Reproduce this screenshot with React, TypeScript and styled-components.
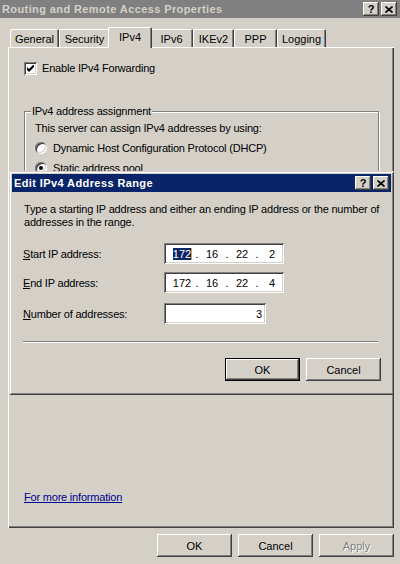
import React from "react";
import styled, { createGlobalStyle, css } from "styled-components";

const GlobalStyle = createGlobalStyle`
  html, body {
    margin: 0;
    padding: 0;
  }
  body {
    background: #d4d0c8;
    font-family: "Liberation Sans", Arial, sans-serif;
    font-size: 11px;
    letter-spacing: -0.2px;
    color: #000;
  }
`;

const raised = css`
  box-shadow: inset -1px -1px #404040, inset 1px 1px #fff,
    inset -2px -2px #808080, inset 2px 2px #d4d0c8;
`;

const sunken = css`
  box-shadow: inset 1px 1px #808080, inset -1px -1px #fff,
    inset 2px 2px #404040, inset -2px -2px #d4d0c8;
`;

const Window = styled.div`
  position: relative;
  width: 400px;
  height: 564px;
  overflow: hidden;
  display: flex;
  flex-direction: column;
`;

const TitleBar = styled.div<{ $active?: boolean }>`
  flex-shrink: 0;
  height: 18px;
  display: flex;
  align-items: center;
  justify-content: space-between;
  padding: 0 ${(p) => (p.$active ? 2 : 3)}px 0 2px;
  background: ${(p) => (p.$active ? "#0a246a" : "#808080")};
  color: ${(p) => (p.$active ? "#fff" : "#d4d0c8")};
  font-weight: bold;
  letter-spacing: 0.4px;
  white-space: nowrap;
`;

const CaptionButtons = styled.div`
  display: flex;
  gap: 2px;
`;

const CaptionButton = styled.div`
  box-sizing: border-box;
  width: 16px;
  height: 14px;
  display: flex;
  align-items: center;
  justify-content: center;
  background: #d4d0c8;
  color: #000;
  font-weight: bold;
  font-size: 11px;
  letter-spacing: 0;
  line-height: 14px;
  ${raised}
`;

const Body = styled.div`
  display: flex;
  flex-direction: column;
  padding: 9px 6px 0 8px;
`;

const TabRow = styled.div`
  position: relative;
  z-index: 1;
  display: flex;
  align-items: flex-end;
  height: 20px;
  padding-left: 2px;
`;

const Tab = styled.div<{ $w: number; $active?: boolean }>`
  box-sizing: border-box;
  width: ${(p) => p.$w}px;
  height: 18px;
  display: flex;
  align-items: center;
  justify-content: center;
  padding-top: 1px;
  background: #d4d0c8;
  letter-spacing: 0;
  border-top-left-radius: 2px;
  border-top-right-radius: 2px;
  box-shadow: inset 1px 1px #fff, inset -1px 0 #404040, inset -2px 0 #808080;
  white-space: nowrap;
  ${(p) =>
    p.$active &&
    css`
      position: relative;
      z-index: 1;
      height: 21px;
      margin: 0 -2px -1px;
      padding-bottom: 3px;
    `}
`;

const Panel = styled.div`
  box-sizing: border-box;
  height: 481px;
  display: flex;
  flex-direction: column;
  padding: 15px 0 0 16px;
  box-shadow: inset 1px 1px #fff, inset -1px -1px #404040,
    inset -2px -2px #808080;
`;

const CheckRow = styled.div`
  display: flex;
  align-items: center;
  gap: 5px;
  height: 13px;
  line-height: 13px;
`;

const CheckBox = styled.div`
  box-sizing: border-box;
  width: 13px;
  height: 13px;
  display: flex;
  align-items: center;
  justify-content: center;
  background: #fff;
  ${sunken}
`;

const GroupBox = styled.fieldset`
  box-sizing: border-box;
  width: 355px;
  height: 270px;
  margin: 30px 0 0;
  padding: 4px 0 0 10px;
  border: 1px solid #808080;
  box-shadow: 1px 1px 0 #fff, inset 1px 1px 0 #fff;
`;

const Legend = styled.legend`
  margin-left: -4px;
  padding: 0 1px;
  line-height: 13px;
  background: #d4d0c8;
`;

const Line = styled.div`
  line-height: 13px;
  white-space: nowrap;
`;

const RadioRow = styled.div<{ $top: number }>`
  display: flex;
  align-items: center;
  gap: 6px;
  height: 13px;
  margin-top: ${(p) => p.$top}px;
  white-space: nowrap;
`;

const Radio = styled.div<{ $checked?: boolean }>`
  position: relative;
  box-sizing: border-box;
  width: 12px;
  height: 12px;
  border-radius: 50%;
  background: #fff;
  ${sunken}
  ${(p) =>
    p.$checked &&
    css`
      &::after {
        content: "";
        position: absolute;
        left: 4px;
        top: 4px;
        width: 4px;
        height: 4px;
        border-radius: 50%;
        background: #000;
      }
    `}
`;

const MoreLink = styled.a`
  align-self: flex-start;
  margin: auto 0 24px;
  color: #000090;
  text-decoration: underline;
  line-height: 13px;
  cursor: pointer;
`;

const ButtonRow = styled.div<{ $top: number; $right: number }>`
  display: flex;
  justify-content: flex-end;
  gap: 6px;
  margin-top: ${(p) => p.$top}px;
  padding-right: ${(p) => p.$right}px;
`;

const Button = styled.button<{ $default?: boolean; $disabled?: boolean }>`
  box-sizing: border-box;
  width: 75px;
  height: 23px;
  padding: 0;
  border: none;
  background: #d4d0c8;
  font-family: "Liberation Sans", Arial, sans-serif;
  font-size: 11px;
  color: ${(p) => (p.$disabled ? "#808080" : "#000")};
  text-shadow: ${(p) => (p.$disabled ? "1px 1px 0 #fff" : "none")};
  ${raised}
  ${(p) =>
    p.$default &&
    css`
      border: 1px solid #000;
    `}
`;

const Dialog = styled.div`
  position: absolute;
  left: 9px;
  top: 171px;
  z-index: 5;
  box-sizing: border-box;
  width: 385px;
  height: 224px;
  padding: 3px;
  display: flex;
  flex-direction: column;
  background: #d4d0c8;
  box-shadow: inset 1px 1px #d4d0c8, inset -1px -1px #404040,
    inset 2px 2px #fff, inset -2px -2px #808080;
`;

const DialogBody = styled.div`
  display: flex;
  flex-direction: column;
  padding: 11px 0 0 12px;
`;

const FieldRow = styled.div<{ $top: number }>`
  display: flex;
  align-items: center;
  margin-top: ${(p) => p.$top}px;
`;

const FieldLabel = styled.div`
  width: 140px;
  margin-left: -1px;
  white-space: nowrap;
`;

const Key = styled.span`
  text-decoration: underline;
`;

const IpBox = styled.div`
  box-sizing: border-box;
  width: 120px;
  height: 21px;
  display: flex;
  align-items: center;
  padding-left: 6px;
  margin-left: 1px;
  background: #fff;
  letter-spacing: 0;
  ${sunken}
`;

const Octet = styled.div`
  width: 24px;
  text-align: center;
`;

const Dot = styled.div`
  width: 6px;
  text-align: center;
`;

const Selected = styled.span`
  background: #0a246a;
  color: #fff;
  box-shadow: 1px 0 0 #e0a030;
`;

const NumberBox = styled.div`
  box-sizing: border-box;
  width: 102px;
  height: 21px;
  margin-left: 1px;
  display: flex;
  align-items: center;
  justify-content: flex-end;
  padding-right: 4px;
  background: #fff;
  ${sunken}
`;

const Separator = styled.div`
  width: 355px;
  margin: 17px 0 0 -1px;
  border-top: 1px solid #808080;
  border-bottom: 1px solid #fff;
`;

const CloseGlyph = () => (
  <svg width="8" height="7" viewBox="0 0 8 7">
    <path d="M0.5 0.5 L7.5 6.5 M7.5 0.5 L0.5 6.5" stroke="#000" strokeWidth="1.7" />
  </svg>
);

const CheckGlyph = () => (
  <svg width="7" height="7" viewBox="0 0 7 7">
    <path d="M0 2 L2 4 L7 -1 L7 2 L2 7 L0 5 Z" fill="#000" />
  </svg>
);

const tabs = [
  { label: "General", w: 49 },
  { label: "Security", w: 51 },
  { label: "IPv4", w: 44, active: true },
  { label: "IPv6", w: 43 },
  { label: "IKEv2", w: 41 },
  { label: "PPP", w: 43 },
  { label: "Logging", w: 49 },
];

const IpField = ({ octets, selectFirst }: { octets: string[]; selectFirst?: boolean }) => (
  <IpBox>
    {octets.map((o, i) => (
      <React.Fragment key={i}>
        {i > 0 && <Dot>.</Dot>}
        <Octet>{i === 0 && selectFirst ? <Selected>{o}</Selected> : o}</Octet>
      </React.Fragment>
    ))}
  </IpBox>
);

export default function App() {
  return (
    <>
      <GlobalStyle />
      <Window>
        <TitleBar>
          <span>Routing and Remote Access Properties</span>
          <CaptionButtons>
            <CaptionButton>?</CaptionButton>
            <CaptionButton>
              <CloseGlyph />
            </CaptionButton>
          </CaptionButtons>
        </TitleBar>
        <Body>
          <TabRow>
            {tabs.map((t) => (
              <Tab key={t.label} $w={t.w} $active={t.active}>
                {t.label}
              </Tab>
            ))}
          </TabRow>
          <Panel>
            <CheckRow>
              <CheckBox>
                <CheckGlyph />
              </CheckBox>
              <span>Enable IPv4 Forwarding</span>
            </CheckRow>
            <GroupBox>
              <Legend>IPv4 address assignment</Legend>
              <Line>This server can assign IPv4 addresses by using:</Line>
              <RadioRow $top={6}>
                <Radio />
                <span>Dynamic Host Configuration Protocol (DHCP)</span>
              </RadioRow>
              <RadioRow $top={7}>
                <Radio $checked />
                <span>Static address pool</span>
              </RadioRow>
            </GroupBox>
            <MoreLink>For more information</MoreLink>
          </Panel>
          <ButtonRow $top={6} $right={0}>
            <Button>OK</Button>
            <Button>Cancel</Button>
            <Button $disabled>Apply</Button>
          </ButtonRow>
        </Body>

        <Dialog>
          <TitleBar $active>
            <span>Edit IPv4 Address Range</span>
            <CaptionButtons>
              <CaptionButton>?</CaptionButton>
              <CaptionButton>
                <CloseGlyph />
              </CaptionButton>
            </CaptionButtons>
          </TitleBar>
          <DialogBody>
            <Line>
              Type a starting IP address and either an ending IP address or the number of
              <br />
              addresses in the range.
            </Line>
            <FieldRow $top={14}>
              <FieldLabel>
                <Key>S</Key>tart IP address:
              </FieldLabel>
              <IpField octets={["172", "16", "22", "2"]} selectFirst />
            </FieldRow>
            <FieldRow $top={8}>
              <FieldLabel>
                <Key>E</Key>nd IP address:
              </FieldLabel>
              <IpField octets={["172", "16", "22", "4"]} />
            </FieldRow>
            <FieldRow $top={10}>
              <FieldLabel>
                <Key>N</Key>umber of addresses:
              </FieldLabel>
              <NumberBox>3</NumberBox>
            </FieldRow>
            <Separator />
            <ButtonRow $top={15} $right={10}>
              <Button $default>OK</Button>
              <Button>Cancel</Button>
            </ButtonRow>
          </DialogBody>
        </Dialog>
      </Window>
    </>
  );
}
